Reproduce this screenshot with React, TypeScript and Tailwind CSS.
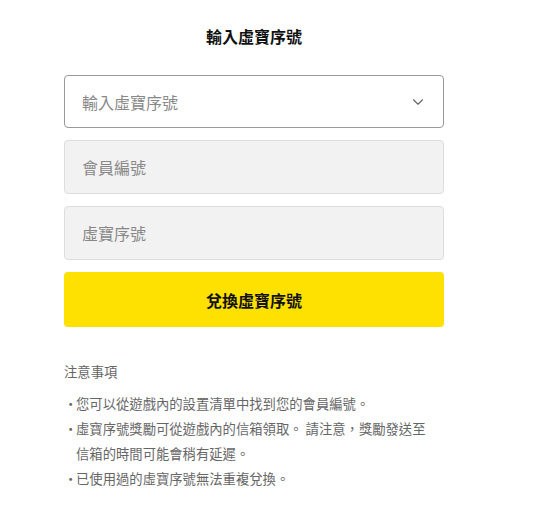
import { ChevronDown } from 'lucide-react'

const FONT = { fontFamily: '"Noto Sans CJK TC", "Noto Sans", sans-serif' }

const NOTES = [
  '您可以從遊戲內的設置清單中找到您的會員編號。',
  '虛寶序號獎勵可從遊戲內的信箱領取。 請注意，獎勵發送至信箱的時間可能會稍有延遲。',
  '已使用過的虛寶序號無法重複兌換。',
]

export default function App() {
  return (
    <div className="min-h-[522px] bg-white" style={FONT}>
      <div className="ml-[64px] w-[380px] pt-[24px]">
        <h1 className="text-center text-[16px] font-bold leading-[24px] text-[#111]">輸入虛寶序號</h1>

        <div className="mt-[27px] flex flex-col gap-[12px]">
          <div className="flex h-[53px] items-center justify-between rounded-[4px] border border-[#999] bg-white pl-[17px] pr-[16px]">
            <span className="text-[16px] text-[#888]">輸入虛寶序號</span>
            <ChevronDown className="h-[18px] w-[18px] text-[#666]" strokeWidth={1.5} />
          </div>
          <input
            className="h-[54px] rounded-[4px] border border-[#ddd] bg-[#f2f2f2] px-[17px] text-[16px] text-[#333] outline-none placeholder:text-[#888]"
            placeholder="會員編號"
          />
          <input
            className="h-[54px] rounded-[4px] border border-[#ddd] bg-[#f2f2f2] px-[17px] text-[16px] text-[#333] outline-none placeholder:text-[#888]"
            placeholder="虛寶序號"
          />
          <button className="h-[55px] rounded-[4px] bg-[#ffe100] text-[16px] font-bold text-[#111]">兌換虛寶序號</button>
        </div>

        <div className="mt-[33px]">
          <div className="text-[13.33px] leading-[24px] text-[#666]">注意事項</div>
          <ul className="mt-[7px] text-[13.33px] leading-[25px] text-[#666]">
            {NOTES.map((n, i) => (
              <li key={i} className="flex">
                <span className="w-[12px] shrink-0">·</span>
                <span className="max-w-[358px]">{n}</span>
              </li>
            ))}
          </ul>
        </div>
      </div>
    </div>
  )
}
